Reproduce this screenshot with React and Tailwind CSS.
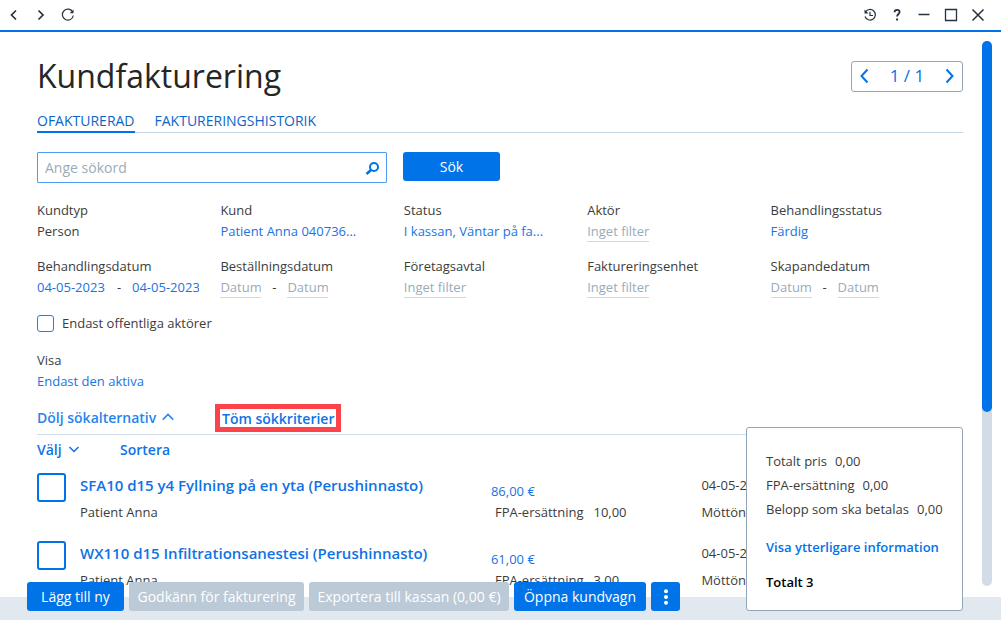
import { useState } from "react";

const filterRows = [
  { label: "Kundtyp", value: "Person", type: "text" },
  { label: "Kund", value: "Patient Anna 040736...", type: "link" },
  { label: "Status", value: "I kassan, Väntar på fa...", type: "link" },
  { label: "Aktör", value: "Inget filter", type: "empty" },
  { label: "Behandlingsstatus", value: "Färdig", type: "link" },
  {
    label: "Behandlingsdatum",
    type: "dates",
    from: "04-05-2023",
    to: "04-05-2023",
  },
  { label: "Beställningsdatum", type: "dates", from: "", to: "" },
  { label: "Företagsavtal", value: "Inget filter", type: "empty" },
  { label: "Faktureringsenhet", value: "Inget filter", type: "empty" },
  { label: "Skapandedatum", type: "dates", from: "", to: "" },
];

const invoiceRows = [
  {
    id: 1,
    title: "SFA10 d15 y4 Fyllning på en yta (Perushinnasto)",
    patient: "Patient Anna",
    price: "86,00 €",
    compensation: "10,00",
    date: "04-05-2023",
    actor: "Möttönen",
  },
  {
    id: 2,
    title: "WX110 d15 Infiltrationsanestesi (Perushinnasto)",
    patient: "Patient Anna",
    price: "61,00 €",
    compensation: "3,00",
    date: "04-05-2023",
    actor: "Möttönen",
  },
];

const Chevron = ({ d, className }) => (
  <svg
    viewBox="0 0 16 16"
    fill="none"
    stroke="currentColor"
    strokeWidth="2"
    className={className}
  >
    <path d={d} />
  </svg>
);

const BarButton = ({ label, children }) => (
  <button
    type="button"
    aria-label={label}
    className="w-[27px] h-full flex items-center justify-center"
  >
    <svg
      viewBox="0 0 16 16"
      fill="none"
      stroke="currentColor"
      strokeWidth="1.2"
      className="w-4 h-4"
    >
      {children}
    </svg>
  </button>
);

const WindowBar = () => (
  <header className="h-8 flex-shrink-0 flex justify-between pr-[10px] text-[#26323e] border-b-2 border-[#0073e9]">
    <div className="flex">
      <BarButton label="Bakåt">
        <path d="M10 3.5L5.5 8l4.5 4.5" strokeWidth="1.7" />
      </BarButton>
      <BarButton label="Framåt">
        <path d="M5.500 3.5L10 8L5.500 12.500" strokeWidth="1.7" />
      </BarButton>
      <BarButton label="Uppdatera">
        <path d="M12.800 5.200A5.500 5.500 0 1 0 13.300 8.500" />
        <path d="M13.500 2.500v3.800h-3.800z" fill="currentColor" stroke="none" />
      </BarButton>
    </div>
    <div className="flex">
      <BarButton label="Historik">
        <path d="M3.500 5A5.300 5.300 0 1 1 3 9.500" />
        <path d="M2.500 2.500v4h4z" fill="currentColor" stroke="none" />
        <path d="M8 4.800v3.700h3" />
      </BarButton>
      <BarButton label="Hjälp">
        <path
          d="M5.500 5.200C5.600 3.600 6.700 2.800 8.100 2.800c1.500 0 2.500.9 2.500 2.200 0 2-2.500 2-2.500 4.500"
          strokeWidth="1.8"
        />
        <path d="M7.100 11.500h2v2h-2z" fill="currentColor" stroke="none" />
      </BarButton>
      <BarButton label="Minimera">
        <path d="M2.500 7.500h11" strokeWidth="1.500" />
      </BarButton>
      <BarButton label="Maximera">
        <path d="M2.500 2.500h11v11h-11z" strokeWidth="1.300" />
      </BarButton>
      <BarButton label="Stäng">
        <path d="M2.500 2.500l11 11M13.500 2.500l-11 11" strokeWidth="1.500" />
      </BarButton>
    </div>
  </header>
);

const DateField = ({ label, value }) => (
  <input
    type="text"
    aria-label={label}
    placeholder="Datum"
    defaultValue={value}
    className={
      value
        ? "w-[69px] flex-shrink-0 h-[21px] text-[#1a73e2] outline-none"
        : "w-[41px] flex-shrink-0 h-[21px] border-b border-[#c9dbea] placeholder:text-[#9aabba] outline-none"
    }
  />
);

const FilterField = ({ filter }) => (
  <div className="leading-[21px]">
    <p>{filter.label}</p>
    {filter.type === "text" && <p>{filter.value}</p>}
    {filter.type === "link" && (
      <button type="button" className="block text-[#1a73e2]">
        {filter.value}
      </button>
    )}
    {filter.type === "empty" && (
      <button
        type="button"
        className="block h-[21px] text-[#9aabba] border-b border-[#c9dbea]"
      >
        {filter.value}
      </button>
    )}
    {filter.type === "dates" && (
      <div className="flex w-[162px] overflow-hidden">
        <DateField label={`${filter.label} från`} value={filter.from} />
        <span className="w-[26px] flex-shrink-0 text-center">-</span>
        <DateField label={`${filter.label} till`} value={filter.to} />
      </div>
    )}
  </div>
);

const InvoiceRow = ({ row }) => (
  <li className="h-[66px] pt-[9px] grid grid-cols-[43px_41fr_21fr_26fr] border-r border-[#f6c48e]">
    <input
      type="checkbox"
      aria-label={row.title}
      className="appearance-none w-[29px] h-[29px] rounded-[3px] border-2 border-[#0073e9] checked:bg-[#0073e9]"
    />
    <div>
      <a href="#" className="block text-[15px] leading-6 font-semibold text-[#0f72e6]">
        {row.title}
      </a>
      <p className="mt-1 leading-[22px]">{row.patient}</p>
    </div>
    <div className="pt-2">
      <p className="leading-5 text-[#1a73e2]">{row.price}</p>
      <p className="pl-1 leading-[22px] flex gap-[10px]">
        <span>FPA-ersättning</span>
        <span>{row.compensation}</span>
      </p>
    </div>
    <div>
      <p className="leading-6">{row.date}</p>
      <p className="mt-1 leading-[22px]">{row.actor}</p>
    </div>
  </li>
);

const SummaryPanel = () => (
  <aside className="absolute right-[38px] bottom-[9px] w-[217px] bg-white border border-[#93a5b6] rounded-[3px] px-[19px] pt-[21px] pb-4 leading-6">
    <p className="flex gap-2">
      <span>Totalt pris</span>
      <span>0,00</span>
    </p>
    <p className="flex gap-2">
      <span>FPA-ersättning</span>
      <span>0,00</span>
    </p>
    <p className="flex gap-2 whitespace-nowrap">
      <span>Belopp som ska betalas</span>
      <span>0,00</span>
    </p>
    <a
      href="#"
      className="block mt-[14px] font-semibold text-[#0073e9] whitespace-nowrap"
    >
      Visa ytterligare information
    </a>
    <p className="mt-[11px] font-semibold text-black">Totalt 3</p>
  </aside>
);

const ActionBar = () => (
  <div className="absolute left-[27px] bottom-[9px] flex gap-[5px] text-[14px] text-white">
    <button type="button" className="h-[29px] w-[97px] rounded-[3px] bg-[#0073e9]">
      Lägg till ny
    </button>
    <button
      type="button"
      disabled
      className="h-[29px] w-[175px] rounded-[3px] bg-[#bcc9d7]"
    >
      Godkänn för fakturering
    </button>
    <button
      type="button"
      disabled
      className="h-[29px] w-[200px] rounded-[3px] bg-[#bcc9d7]"
    >
      Exportera till kassan (0,00 €)
    </button>
    <button type="button" className="h-[29px] w-[132px] rounded-[3px] bg-[#0073e9]">
      Öppna kundvagn
    </button>
    <button
      type="button"
      aria-label="Fler åtgärder"
      className="h-[29px] w-[29px] rounded-[3px] bg-[#0073e9] flex items-center justify-center"
    >
      <svg viewBox="0 0 16 16" fill="currentColor" className="w-4 h-4">
        <circle cx="8" cy="2.300" r="2" />
        <circle cx="8" cy="8" r="2" />
        <circle cx="8" cy="13.700" r="2" />
      </svg>
    </button>
  </div>
);

const App = () => {
  const [query, setQuery] = useState("");

  return (
    <div className="relative h-screen overflow-hidden flex flex-col bg-white font-['Open_Sans',sans-serif] text-[13px] text-[#3c3c3c]">
      <WindowBar />

      <div className="flex-1 min-h-0 flex">
        <main className="flex-1 min-w-0 overflow-hidden pl-[37px] pr-[19px] pt-[23px]">
          <div className="flex items-center justify-between">
            <h1 className="text-[32px] leading-[42px] text-[#262626]">
              Kundfakturering
            </h1>
            <div className="w-28 h-[31px] px-[5px] flex items-center justify-between border border-[#93a5b6] rounded-[3px] text-[17px] text-[#0073e9]">
              <button type="button" aria-label="Föregående sida">
                <Chevron d="M10.500 1.500L4.500 8l6 6.500" className="w-4 h-4" />
              </button>
              <span>1 / 1</span>
              <button type="button" aria-label="Nästa sida">
                <Chevron d="M5.500 1.500L11.500 8l-6 6.500" className="w-4 h-4" />
              </button>
            </div>
          </div>

          <nav className="mt-[13px] flex gap-5 border-b border-[#c9d8e6] text-[14px] leading-[21px] text-[#0b66c8]">
            <a href="#" className="-mb-px border-b-2 border-[#0073e9]">
              OFAKTURERAD
            </a>
            <a href="#">FAKTURERINGSHISTORIK</a>
          </nav>

          <form
            className="mt-[19px] flex gap-4 text-[14px]"
            onSubmit={(e) => e.preventDefault()}
          >
            <div className="w-[350px] h-[31px] flex items-center px-[7px] border border-[#4a9df2] rounded-[1px]">
              <input
                type="text"
                aria-label="Sökord"
                placeholder="Ange sökord"
                value={query}
                onChange={(e) => setQuery(e.target.value)}
                className="flex-1 min-w-0 outline-none placeholder:text-[#9aabba]"
              />
              <svg
                viewBox="0 0 14 14"
                fill="none"
                stroke="#0073e9"
                className="w-[14px] h-[14px]"
              >
                <circle cx="9" cy="6" r="4" strokeWidth="2" />
                <path d="M6 9L1.500 13" strokeWidth="2.600" />
              </svg>
            </div>
            <button
              type="submit"
              className="w-[97px] h-[29px] rounded-[3px] bg-[#0073e9] text-white"
            >
              Sök
            </button>
          </form>

          <div className="mt-[17px] mr-[9px] grid grid-cols-5 gap-y-[14px]">
            {filterRows.map((filter) => (
              <FilterField key={filter.label} filter={filter} />
            ))}
          </div>

          <label className="mt-[15px] h-[21px] flex items-center gap-2">
            <input
              type="checkbox"
              className="appearance-none w-[17px] h-[17px] rounded-[3px] border border-[#1f80ea] checked:bg-[#0073e9]"
            />
            Endast offentliga aktörer
          </label>

          <div className="mt-4 leading-[21px]">
            <p>Visa</p>
            <button type="button" className="block text-[#1a73e2]">
              Endast den aktiva
            </button>
          </div>

          <div className="mt-3 pb-[2px] flex items-start border-b border-[#d0dde9] text-[14px] font-semibold text-[#0f72e6]">
            <button
              type="button"
              className="w-[178px] h-[26px] flex items-center gap-[6px] text-[#2585ee]"
            >
              Dölj sökalternativ
              <Chevron d="M1 11.500L8 4.500l7 7" className="w-3 h-3" />
            </button>
            <button
              type="button"
              className="h-7 px-[2px] border-[5px] border-[#fc4349] flex items-center whitespace-nowrap"
            >
              Töm sökkriterier
            </button>
          </div>

          <div className="mt-[5px] flex text-[14px] leading-5 font-semibold text-[#0f72e6]">
            <button type="button" className="w-[83px] flex items-center gap-[6px]">
              Välj
              <Chevron d="M2 4L8 10l6-6" className="w-3 h-3" />
            </button>
            <button type="button">Sortera</button>
          </div>

          <ul className="mt-1 space-y-[2px]">
            {invoiceRows.map((row) => (
              <InvoiceRow key={row.id} row={row} />
            ))}
          </ul>
        </main>

        <div className="w-[10px] mt-[9px] mb-[11px] mr-[9px] rounded-full bg-[#d2dce7]">
          <div className="h-[68%] rounded-full bg-[#0073e9]" />
        </div>
      </div>

      <footer className="h-[23px] flex-shrink-0 bg-[#e1e8ef]">
        <ActionBar />
        <SummaryPanel />
      </footer>
    </div>
  );
};

export default App;
